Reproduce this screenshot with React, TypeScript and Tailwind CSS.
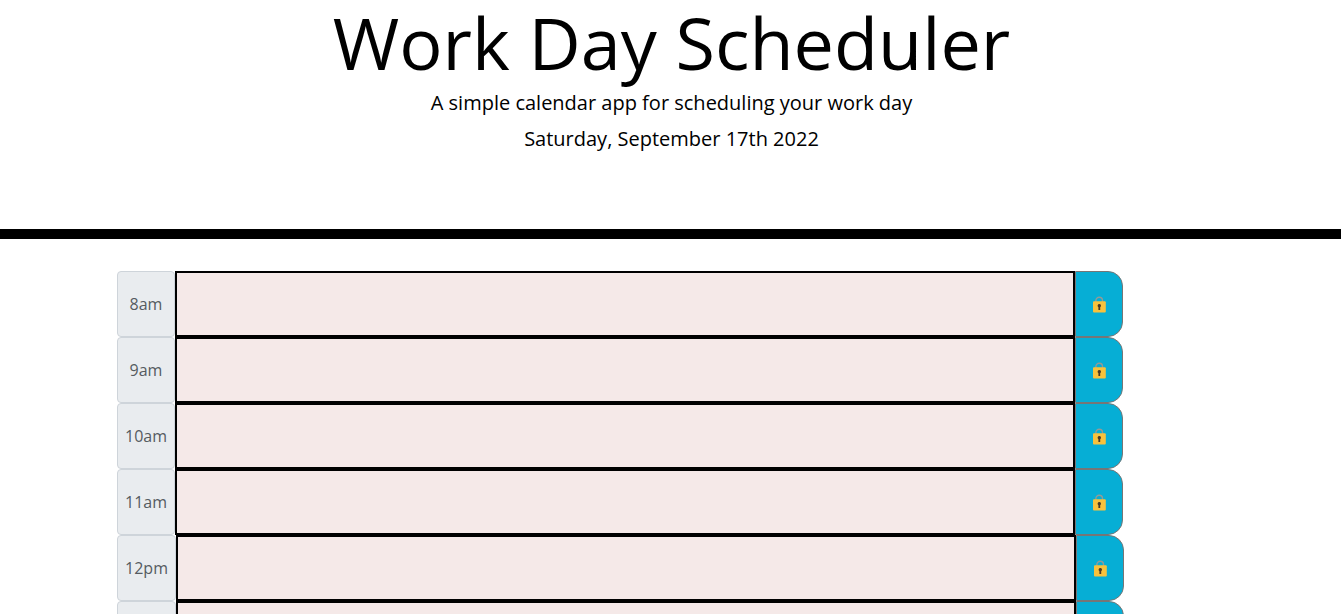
const hours = [
  { label: '8am', width: 'w-[58px]' },
  { label: '9am', width: 'w-[58px]' },
  { label: '10am', width: 'w-[58px]' },
  { label: '11am', width: 'w-[58px]' },
  { label: '12pm', width: 'w-[59px]' },
  { label: '1pm', width: 'w-[59px]' },
];

function LockIcon() {
  return (
    <svg className="mt-px h-[18px] w-[14px]" viewBox="0 0 14 18">
      <path d="M3.9 6V4.6a3.3 3.3 0 0 1 6.6 0V6" fill="none" stroke="#929b96" strokeWidth="1.4" />
      <rect x="1" y="5.2" width="12.8" height="11.3" rx="1" fill="#f8c23c" />
      <path d="M7.3 7.9a1.8 1.8 0 0 0-.9 3.3v2.7h1.8v-2.7A1.8 1.8 0 0 0 7.3 7.9Z" fill="#4b3a25" />
    </svg>
  );
}

function TimeBlock({ label, width }: { label: string; width: string }) {
  return (
    <div className="flex h-[66px]">
      <div
        className={`${width} flex shrink-0 items-center justify-center rounded-[4px] border border-[#ced4da] bg-[#e9ecef] text-base font-normal text-[#555b61]`}
      >
        {label}
      </div>
      <textarea
        aria-label={label}
        className="block h-[66px] w-[900px] shrink-0 resize-none border-2 border-black bg-[#f5e9e8] p-2 outline-none"
      />
      <button
        aria-label="Save"
        className="flex w-12 shrink-0 items-center justify-center rounded-r-[15px] border border-[#767676] bg-[#06aed5]"
      >
        <LockIcon />
      </button>
    </div>
  );
}

export default function App() {
  return (
    <div className="h-screen overflow-hidden bg-white font-['Open_Sans',sans-serif] text-black">
      <header className="flex h-[239px] flex-col items-center border-b-[10px] border-black pl-[2px] text-center">
        <h1 className="text-[72px] leading-[84px] font-normal">Work Day Scheduler</h1>
        <p className="mt-1 text-[20px] leading-[30px] font-normal">A simple calendar app for scheduling your work day</p>
        <p className="mt-[6px] text-[20px] leading-[30px] font-normal">Saturday, September 17th 2022</p>
      </header>
      <main className="pt-8 pl-[117px]">
        {hours.map((hour) => (
          <TimeBlock key={hour.label} {...hour} />
        ))}
      </main>
    </div>
  );
}
